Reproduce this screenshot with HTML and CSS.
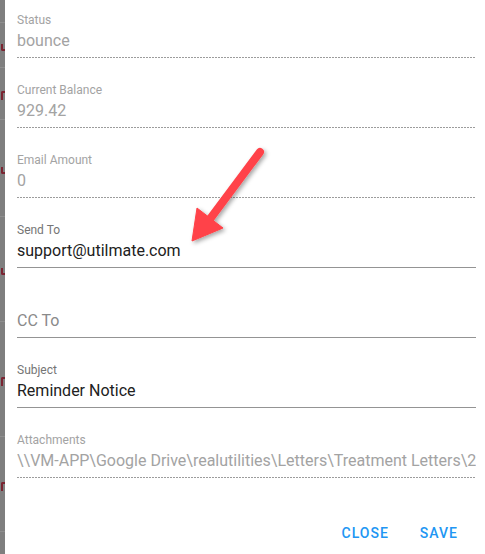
FILE: index.html
```html
<!DOCTYPE html>
<html lang="en">
<head>
<meta charset="utf-8">
<title>Email dialog</title>
<link rel="stylesheet" href="styles.css">
</head>
<body>
<div class="page">
  <div class="backdrop">
    <div class="bg-row" style="height:23px"></div>
    <div class="bg-row" style="height:45px"><span class="frag frag-u"></span></div>
    <div class="bg-row" style="height:52px"><span class="frag frag-p"></span></div>
    <div class="bg-row" style="height:97px"><span class="frag frag-u"></span></div>
    <div class="bg-row" style="height:105px"><span class="frag frag-u"></span></div>
    <div class="bg-row" style="height:115px"><span class="frag frag-p"></span></div>
    <div class="bg-row" style="height:95px"><span class="frag frag-p"></span></div>
    <div class="bg-row last"></div>
  </div>
  <div class="dialog">
    <div class="fields">
      <div class="field disabled">
        <div class="label">Status</div>
        <div class="value">bounce</div>
        <div class="underline"></div>
      </div>
      <div class="field disabled">
        <div class="label">Current Balance</div>
        <div class="value">929.42</div>
        <div class="underline"></div>
      </div>
      <div class="field disabled">
        <div class="label">Email Amount</div>
        <div class="value">0</div>
        <div class="underline"></div>
      </div>
      <div class="field">
        <div class="label">Send To</div>
        <div class="value">support@utilmate.com</div>
        <div class="underline"></div>
      </div>
      <div class="field">
        <div class="label"></div>
        <div class="value placeholder">CC To</div>
        <div class="underline"></div>
      </div>
      <div class="field">
        <div class="label">Subject</div>
        <div class="value">Reminder Notice</div>
        <div class="underline"></div>
      </div>
      <div class="field disabled">
        <div class="label">Attachments</div>
        <div class="value">\\VM-APP\Google Drive\realutilities\Letters\Treatment Letters\2</div>
        <div class="underline"></div>
      </div>
    </div>
    <div class="actions">
      <button class="btn">Close</button>
      <button class="btn">Save</button>
    </div>
  </div>
  <svg class="arrow" width="485" height="554" viewBox="0 0 485 554" aria-hidden="true">
    <defs>
      <filter id="shadow" x="-20%" y="-20%" width="150%" height="150%">
        <feDropShadow dx="2" dy="2" stdDeviation="2" flood-color="#000" flood-opacity="0.35"/>
      </filter>
    </defs>
    <g filter="url(#shadow)" fill="#ff4248" stroke="#ff4248">
      <line x1="260" y1="152" x2="210" y2="219" stroke-width="8" stroke-linecap="round"/>
      <polygon points="192,241 197,208 223,228" stroke-width="1" stroke-linejoin="round"/>
    </g>
  </svg>
</div>
</body>
</html>
```

FILE: styles.css
```css
html, body {
  margin: 0;
  padding: 0;
}

body {
  font-family: Roboto, "Noto Sans", Arial, sans-serif;
  background: #ffffff;
}

.page {
  position: relative;
  width: 485px;
  height: 554px;
  display: flex;
  overflow: hidden;
}

.backdrop {
  width: 5px;
  flex: none;
  background: #7f7f7f;
  display: flex;
  flex-direction: column;
  overflow: hidden;
}

.bg-row {
  flex: none;
  border-bottom: 1px solid #8e8e8e;
  box-sizing: border-box;
  display: flex;
  align-items: center;
  justify-content: flex-end;
}

.bg-row.last {
  flex: 1;
  border-bottom: none;
}

.frag {
  display: block;
  width: 4px;
  height: 7px;
  box-sizing: border-box;
}

.frag-u {
  border-left: 2px solid #7a2431;
  border-bottom: 2px solid #7a2431;
  border-bottom-left-radius: 2px;
  margin-top: 4px;
}

.frag-p {
  height: 9px;
  border-left: 2px solid #7a2431;
  border-top: 2px solid #7a2431;
  border-top-left-radius: 2px;
  margin-top: 4px;
}

.dialog {
  flex: 1;
  min-width: 0;
  background: #ffffff;
  padding: 0 9px 0 12px;
  display: flex;
  flex-direction: column;
}

.fields {
  display: flex;
  flex-direction: column;
}

.field {
  height: 70px;
  box-sizing: border-box;
  padding-top: 12px;
  display: flex;
  flex-direction: column;
}

.label {
  height: 16px;
  font-size: 12px;
  line-height: 16px;
  color: #757575;
}

.value {
  margin-top: 3px;
  height: 20px;
  font-size: 16px;
  line-height: 20px;
  color: #212121;
  white-space: nowrap;
  overflow: hidden;
}

.value.placeholder {
  color: #8a8a8a;
}

.underline {
  margin-top: 6px;
  height: 1px;
  background: #949494;
}

.field.disabled .label,
.field.disabled .value {
  color: #a3a3a3;
}

.field.disabled .underline {
  background: repeating-linear-gradient(to right, #9c9c9c 0, #9c9c9c 2px, transparent 2px, transparent 3px);
}

.actions {
  margin-top: 25px;
  display: flex;
  justify-content: flex-end;
  gap: 15px;
  padding-right: 10px;
}

.btn {
  height: 36px;
  padding: 0 8px;
  border: none;
  background: transparent;
  font-family: Roboto, "Noto Sans", Arial, sans-serif;
  font-size: 14px;
  font-weight: 500;
  letter-spacing: 1px;
  text-transform: uppercase;
  color: #2196f3;
  line-height: 36px;
  cursor: pointer;
}

.arrow {
  position: absolute;
  left: 0;
  top: 0;
  pointer-events: none;
}
```
